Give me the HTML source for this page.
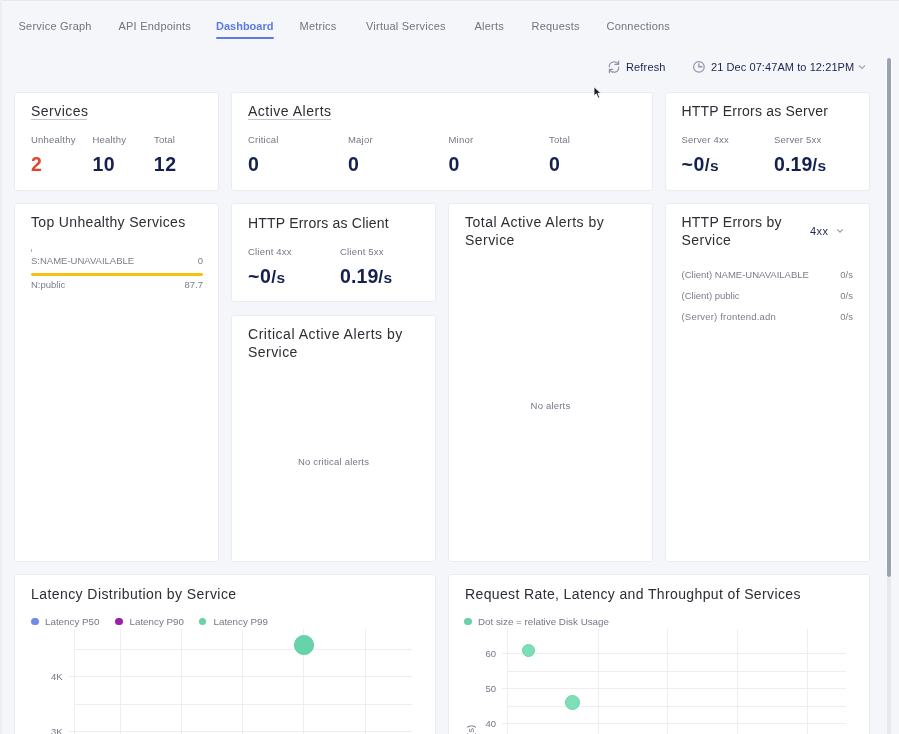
<!DOCTYPE html>
<html><head><meta charset="utf-8">
<style>
*{box-sizing:border-box;margin:0;padding:0}
html,body{width:899px;height:734px;overflow:hidden;background:#f5f6fa;font-family:"Liberation Sans",sans-serif;}
body{position:relative;}
.wrap{position:absolute;left:0;top:0;width:899px;height:734px;will-change:transform;}
.a{position:absolute;white-space:nowrap;line-height:1;}
.topline{position:absolute;left:0;top:0;width:899px;height:1px;background:#e6e8ee;}
.nav{font-size:11px;color:#71747f;letter-spacing:0.22px;}
.navact{font-size:11px;color:#5b7be2;font-weight:700;}
.card{position:absolute;background:#fff;border:1px solid #eaecf1;border-radius:3px;}
.t{font-size:14px;color:#2c2e35;letter-spacing:0.3px;}
.lbl{font-size:9.5px;color:#737887;letter-spacing:0.2px;}
.num{font-size:19.5px;font-weight:700;color:#14204f;letter-spacing:0.5px;}
.unit{letter-spacing:0}
.unit{font-size:15.5px;font-weight:700;}
.sm{font-size:9.5px;color:#7a7e8b;}
.gl{position:absolute;background:#eceef4;}
.ax{font-size:9.5px;color:#737887;}
</style></head><body><div class="wrap">
<div class="topline"></div>
<div style="position:absolute;left:0;top:0;width:2px;height:734px;background:#eeeff3"></div>
<!-- nav -->
<div class="a nav" style="left:18.5px;top:20.5px">Service Graph</div>
<div class="a nav" style="left:118.5px;top:20.5px">API Endpoints</div>
<div class="a navact" style="left:216px;top:20.5px">Dashboard</div>
<div style="position:absolute;left:216px;top:37px;width:57.6px;height:2px;background:#5b7be2;border-radius:1px"></div>
<div class="a nav" style="left:299.5px;top:20.5px">Metrics</div>
<div class="a nav" style="left:366px;top:20.5px">Virtual Services</div>
<div class="a nav" style="left:474.5px;top:20.5px">Alerts</div>
<div class="a nav" style="left:531.5px;top:20.5px">Requests</div>
<div class="a nav" style="left:606.5px;top:20.5px">Connections</div>

<!-- refresh + time -->
<svg style="position:absolute;left:604px;top:57px" width="20" height="20" viewBox="0 0 20 20" fill="none" stroke="#8f96aa" stroke-width="1.25" stroke-linecap="round" stroke-linejoin="round">
  <path d="M5.3 9.7A4.8 4.8 0 0 1 14.3 7.3"/><path d="M14.6 4.1V7.4H11"/>
  <path d="M14.7 10.2A4.8 4.8 0 0 1 5.6 12.5"/><path d="M5.4 15.6V12.4H8.7"/>
</svg>
<div class="a" style="left:626px;top:61.5px;font-size:11px;letter-spacing:0.15px;color:#1a2252">Refresh</div>
<svg style="position:absolute;left:692px;top:61px" width="14" height="14" viewBox="0 0 14 14" fill="none" stroke="#8f96aa" stroke-width="1.2" stroke-linecap="round">
  <circle cx="6.9" cy="5.9" r="5.3"/><path d="M6.9 3.0V5.8H9.9" stroke-width="1.4"/>
</svg>
<div class="a" style="left:711px;top:61.5px;font-size:11px;letter-spacing:0.08px;color:#1a2252">21 Dec 07:47AM to 12:21PM</div>
<svg style="position:absolute;left:858px;top:64px" width="8" height="6" viewBox="0 0 8 6" fill="none" stroke="#a0a4b0" stroke-width="1.1"><path d="M1 1.5l3 3 3-3"/></svg>

<!-- scrollbar -->
<div style="position:absolute;left:886px;top:57px;width:6px;height:521px;background:#9ba2b4;border:1px solid #fbfcfe;border-radius:3px"></div>
<div style="position:absolute;left:887px;top:577px;width:4px;height:157px;background:#e8e9ee"></div>

<!-- Row 1 -->
<div class="card" style="left:14px;top:92px;width:205px;height:99px"></div>
<div class="a t" style="left:31px;top:104.2px;letter-spacing:0.47px">Services</div>
<div style="position:absolute;left:31px;top:119px;width:56px;height:1px;background:#c3c6ce"></div>
<div class="a lbl" style="left:31px;top:135.1px">Unhealthy</div>
<div class="a lbl" style="left:92.5px;top:135.1px">Healthy</div>
<div class="a lbl" style="left:154px;top:135.1px">Total</div>
<div class="a num" style="left:31px;top:154.5px;color:#e2472d">2</div>
<div class="a num" style="left:92.5px;top:154.5px">10</div>
<div class="a num" style="left:153.8px;top:154.5px">12</div>

<div class="card" style="left:231px;top:92px;width:422px;height:99px"></div>
<div class="a t" style="left:248px;top:104.2px;letter-spacing:0.5px">Active Alerts</div>
<div style="position:absolute;left:248px;top:119px;width:83px;height:1px;background:#c3c6ce"></div>
<div class="a lbl" style="left:248px;top:135.1px">Critical</div>
<div class="a lbl" style="left:348px;top:135.1px">Major</div>
<div class="a lbl" style="left:448.5px;top:135.1px">Minor</div>
<div class="a lbl" style="left:549px;top:135.1px">Total</div>
<div class="a num" style="left:248px;top:154.5px">0</div>
<div class="a num" style="left:348px;top:154.5px">0</div>
<div class="a num" style="left:448.5px;top:154.5px">0</div>
<div class="a num" style="left:549px;top:154.5px">0</div>

<div class="card" style="left:665px;top:92px;width:205px;height:99px"></div>
<div class="a t" style="left:681.5px;top:104.2px;letter-spacing:0.21px">HTTP Errors as Server</div>
<div class="a lbl" style="left:681.5px;top:135.1px">Server 4xx</div>
<div class="a lbl" style="left:774px;top:135.1px">Server 5xx</div>
<div class="a num" style="left:681.5px;top:154.5px">~0<span class="unit"><span style="font-size:17.5px;letter-spacing:0.3px">/</span>s</span></div>
<div class="a num" style="left:774px;top:154.5px;letter-spacing:0.1px">0.19<span class="unit"><span style="font-size:17.5px;letter-spacing:0.3px">/</span>s</span></div>

<!-- Row 2 -->
<div class="card" style="left:14px;top:203px;width:205px;height:359px"></div>
<div class="a t" style="left:31px;top:215.4px;letter-spacing:0.34px">Top Unhealthy Services</div>
<div style="position:absolute;left:31px;top:249px;width:1px;height:3px;background:#aeb2bc"></div>
<div class="a sm" style="left:31px;top:256px">S:NAME-UNAVAILABLE</div>
<div class="a sm" style="right:696px;top:256px">0</div>
<div style="position:absolute;left:31px;top:273px;width:172px;height:3px;background:#f3c10f;border-radius:1.5px"></div>
<div class="a sm" style="left:31px;top:279.6px">N:public</div>
<div class="a sm" style="right:696px;top:279.6px">87.7</div>

<div class="card" style="left:231px;top:203px;width:205px;height:99px"></div>
<div class="a t" style="left:248px;top:215.6px;letter-spacing:0.2px">HTTP Errors as Client</div>
<div class="a lbl" style="left:248px;top:247.1px">Client 4xx</div>
<div class="a lbl" style="left:340px;top:247.1px">Client 5xx</div>
<div class="a num" style="left:248px;top:266.5px">~0<span class="unit"><span style="font-size:17.5px;letter-spacing:0.3px">/</span>s</span></div>
<div class="a num" style="left:340px;top:266.5px;letter-spacing:0.1px">0.19<span class="unit"><span style="font-size:17.5px;letter-spacing:0.3px">/</span>s</span></div>

<div class="card" style="left:231px;top:315px;width:205px;height:247px"></div>
<div class="a t" style="left:248px;top:327.2px;letter-spacing:0.53px">Critical Active Alerts by</div>
<div class="a t" style="left:248px;top:344.8px;letter-spacing:0.45px">Service</div>
<div class="a lbl" style="left:231px;width:205px;text-align:center;top:456.9px">No critical alerts</div>

<div class="card" style="left:448px;top:203px;width:205px;height:359px"></div>
<div class="a t" style="left:465px;top:215.4px;letter-spacing:0.49px">Total Active Alerts by</div>
<div class="a t" style="left:465px;top:233.2px;letter-spacing:0.45px">Service</div>
<div class="a lbl" style="left:448px;width:205px;text-align:center;top:400.9px">No alerts</div>

<div class="card" style="left:665px;top:203px;width:205px;height:359px"></div>
<div class="a t" style="left:681.5px;top:215.4px;letter-spacing:0.23px">HTTP Errors by</div>
<div class="a t" style="left:681.5px;top:233.2px;letter-spacing:0.45px">Service</div>
<div class="a" style="left:810px;top:225.7px;font-size:11px;letter-spacing:0.4px;color:#1f2753">4xx</div>
<svg style="position:absolute;left:836px;top:228px" width="8" height="6" viewBox="0 0 8 6" fill="none" stroke="#959bad" stroke-width="1.15"><path d="M1.2 1.4l2.8 2.7 2.8-2.7"/></svg>
<div class="a sm" style="left:681.5px;top:270.4px">(Client) NAME-UNAVAILABLE</div>
<div class="a sm" style="right:46px;top:270.4px">0/s</div>
<div class="a sm" style="left:681.5px;top:291.4px">(Client) public</div>
<div class="a sm" style="right:46px;top:291.4px">0/s</div>
<div class="a sm" style="left:681.5px;top:312px;letter-spacing:0.2px">(Server) frontend.adn</div>
<div class="a sm" style="right:46px;top:312px">0/s</div>

<!-- Row 3 -->
<div class="card" style="left:14px;top:574px;width:422px;height:200px"></div>
<div class="a t" style="left:31px;top:586.6px;letter-spacing:0.43px">Latency Distribution by Service</div>
<div style="position:absolute;left:31.2px;top:617.6px;width:7.8px;height:7.8px;border-radius:50%;background:#6f8de8"></div>
<div class="a lbl" style="left:45px;top:616.5px;font-size:9.8px;letter-spacing:0">Latency P50</div>
<div style="position:absolute;left:115.2px;top:617.6px;width:7.8px;height:7.8px;border-radius:50%;background:#9b1fa8"></div>
<div class="a lbl" style="left:129.5px;top:616.5px;font-size:9.8px;letter-spacing:0">Latency P90</div>
<div style="position:absolute;left:198.7px;top:617.6px;width:7.8px;height:7.8px;border-radius:50%;background:#68d1a6"></div>
<div class="a lbl" style="left:213.5px;top:616.5px;font-size:9.8px;letter-spacing:0">Latency P99</div>
<!-- left chart grid -->
<div class="gl" style="left:74px;top:629px;width:1px;height:105px"></div>
<div class="gl" style="left:120px;top:629px;width:1px;height:105px"></div>
<div class="gl" style="left:181px;top:629px;width:1px;height:105px"></div>
<div class="gl" style="left:242px;top:629px;width:1px;height:105px"></div>
<div class="gl" style="left:303px;top:629px;width:1px;height:105px"></div>
<div class="gl" style="left:365px;top:629px;width:1px;height:105px"></div>
<div class="gl" style="left:74px;top:649px;width:338px;height:1px"></div>
<div class="gl" style="left:69px;top:676px;width:343px;height:1px"></div>
<div class="gl" style="left:74px;top:704px;width:338px;height:1px"></div>
<div class="gl" style="left:69px;top:731px;width:343px;height:1px"></div>
<div class="a ax" style="left:51px;top:672px">4K</div>
<div class="a ax" style="left:51px;top:727px">3K</div>
<div style="position:absolute;left:294.2px;top:635px;width:19.5px;height:19.5px;border-radius:50%;background:#67d3aa;border:1px solid #5ccda0"></div>

<div class="card" style="left:448px;top:574px;width:422px;height:200px"></div>
<div class="a t" style="left:465px;top:586.6px;letter-spacing:0.37px">Request Rate, Latency and Throughput of Services</div>
<div style="position:absolute;left:464.4px;top:617.6px;width:7.8px;height:7.8px;border-radius:50%;background:#68d1a6"></div>
<div class="a lbl" style="left:478px;top:616.5px;font-size:9.8px;letter-spacing:0">Dot size = relative Disk Usage</div>
<div class="gl" style="left:507px;top:629px;width:1px;height:105px"></div>
<div class="gl" style="left:598px;top:629px;width:1px;height:105px"></div>
<div class="gl" style="left:667px;top:629px;width:1px;height:105px"></div>
<div class="gl" style="left:737px;top:629px;width:1px;height:105px"></div>
<div class="gl" style="left:807px;top:629px;width:1px;height:105px"></div>
<div class="gl" style="left:502px;top:653px;width:344px;height:1px"></div>
<div class="gl" style="left:507px;top:671px;width:339px;height:1px"></div>
<div class="gl" style="left:502px;top:688px;width:344px;height:1px"></div>
<div class="gl" style="left:507px;top:706px;width:339px;height:1px"></div>
<div class="gl" style="left:502px;top:723px;width:344px;height:1px"></div>
<div class="a ax" style="left:485.5px;top:649px">60</div>
<div class="a ax" style="left:485.5px;top:684px">50</div>
<div class="a ax" style="left:485.5px;top:719px">40</div>
<div class="a ax" style="left:466px;top:736px;transform:rotate(-90deg);transform-origin:0 0;">(s)</div>
<div style="position:absolute;left:522px;top:643.5px;width:13px;height:13px;border-radius:50%;background:#7ddfb8;border:1px solid #66d3a4"></div>
<div style="position:absolute;left:565px;top:694.5px;width:15px;height:15px;border-radius:50%;background:#7ddfb8;border:1px solid #66d3a4"></div>

<!-- cursor -->
<svg style="position:absolute;left:592px;top:85px" width="12" height="16" viewBox="0 0 12 16">
  <path d="M2 1.8V10.8L4.3 8.8L6.1 13.1L7.7 12.4L5.9 8.3H8.9Z" fill="#1e1e22" stroke="#fff" stroke-width="0.8" stroke-linejoin="round"/>
</svg>
</div></body></html>
